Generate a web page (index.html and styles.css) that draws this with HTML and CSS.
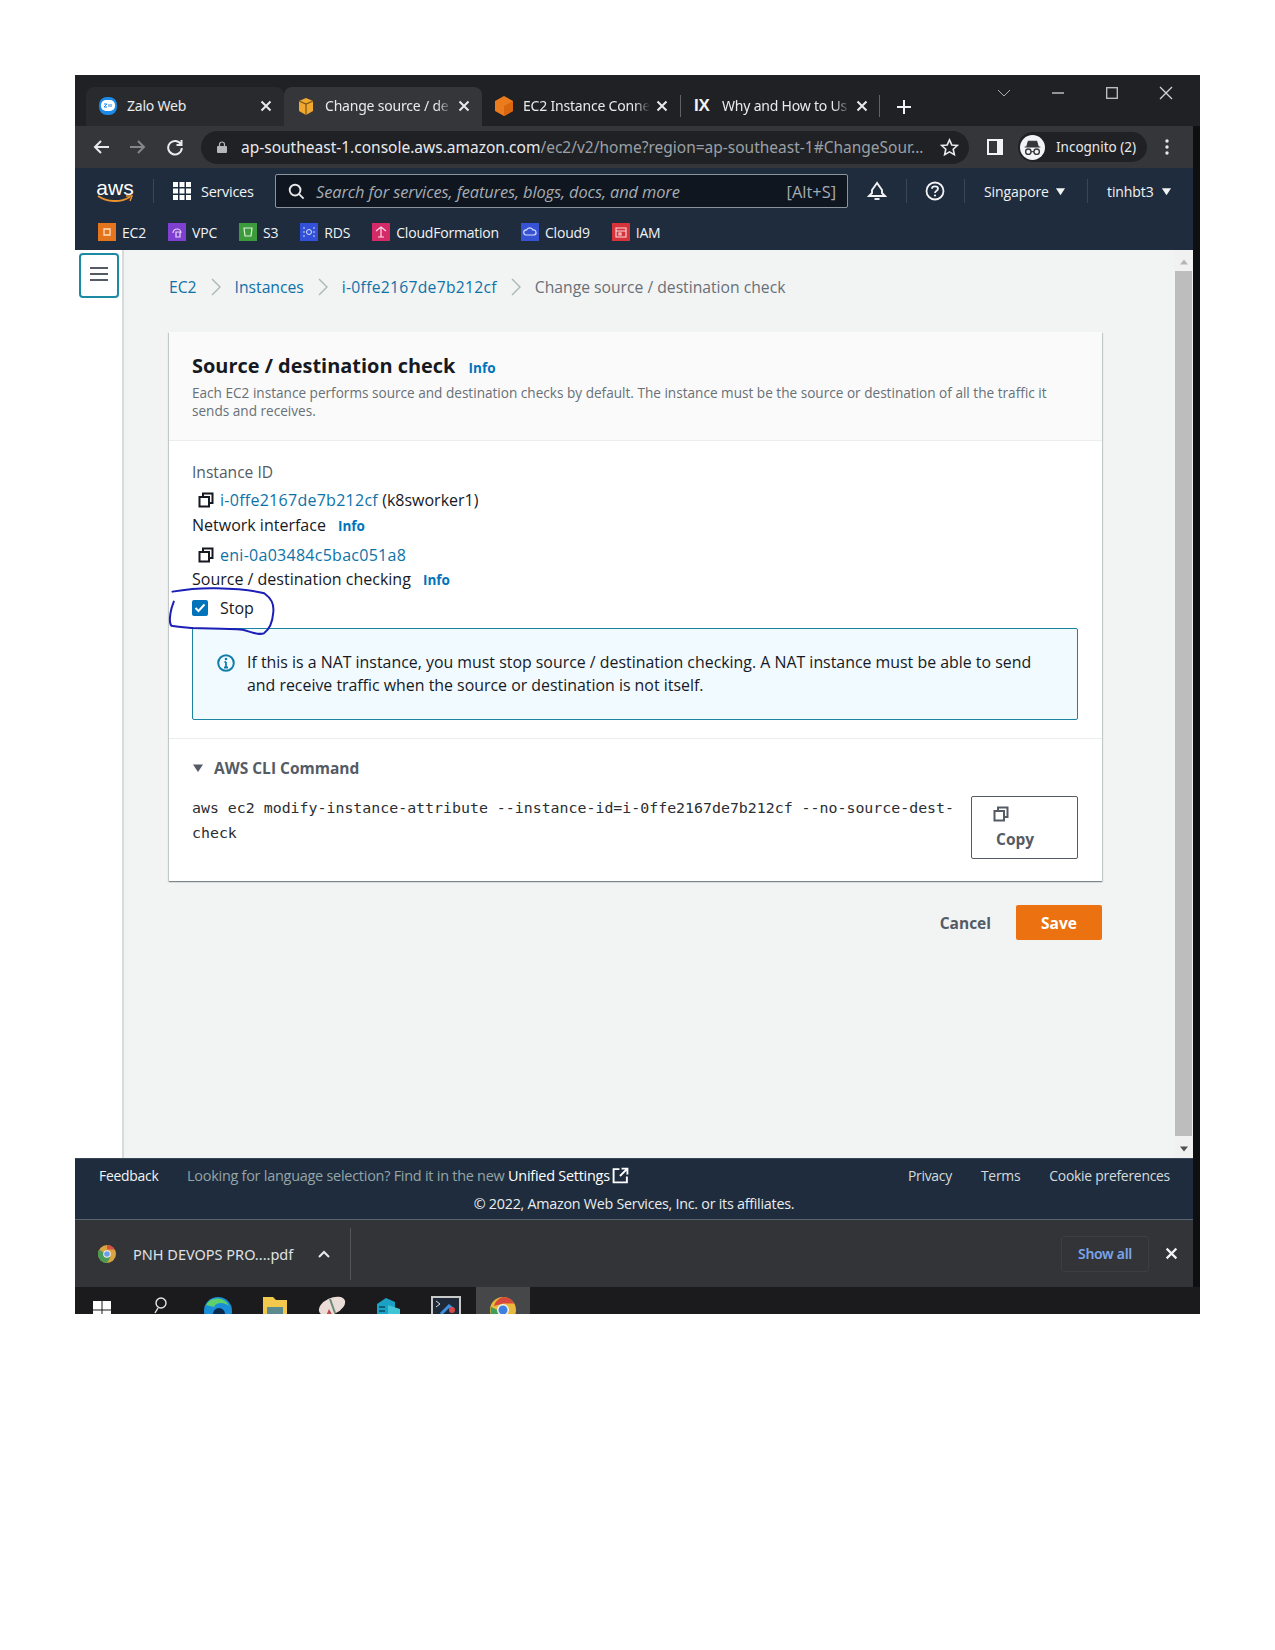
FILE: index.html
```html
<!DOCTYPE html>
<html lang="en">
<head>
  <meta charset="UTF-8">
  <title>Change source / destination check</title>
  <link rel="stylesheet" href="styles.css">
</head>
<body>
<svg class="defs" width="0" height="0">
  <symbol id="copy" viewBox="0 0 16 16">
    <path d="M1.500 5h9.500v9.500H1.500z M5 5V1.500h9.500V11H11" fill="none" stroke="currentColor" stroke-width="2"/>
  </symbol>
  <symbol id="x" viewBox="0 0 12 12">
    <path d="M1.500 1.500l9 9M10.500 1.500l-9 9" fill="none" stroke="currentColor" stroke-width="2"/>
  </symbol>
  <symbol id="caret" viewBox="0 0 12 12">
    <path d="M1 2.500h10L6 10z" fill="currentColor"/>
  </symbol>
</svg>
<div class="window">

  <div class="tabstrip">
    <div class="tab tab-first">
      <svg class="tab-icon" viewBox="0 0 20 20"><rect x="1" y="1" width="18" height="18" rx="8" fill="#1c8ae6"/><rect x="3" y="4" width="14" height="11" rx="5" fill="#fff"/><path d="M6 8h3l-3 3h3M11 8v3M13 8v3" stroke="#1c8ae6" fill="none"/></svg>
      <span class="tab-title">Zalo Web</span>
      <svg class="tab-close"><use href="#x"/></svg>
    </div>
    <div class="tab tab-active">
      <svg class="tab-icon" viewBox="0 0 20 20"><path d="M3 5l7-3 7 3v10l-7 4-7-4z" fill="#f0a92e"/><path d="M3 5l7 3 7-3M10 8v11" fill="none" stroke="#7a5516" stroke-width="1.200"/></svg>
      <span class="tab-title">Change source / de</span>
      <svg class="tab-close"><use href="#x"/></svg>
    </div>
    <div class="tab">
      <svg class="tab-icon" viewBox="0 0 20 20"><path d="M10 0l9 5v10l-9 5-9-5V5z" fill="#ea7c1e"/><path d="M10 10l9-5v10l-9 5z" fill="#d9660f"/></svg>
      <span class="tab-title">EC2 Instance Conne</span>
      <svg class="tab-close"><use href="#x"/></svg>
    </div>
    <div class="tab tab-sep">
      <span class="ix">IX</span>
      <span class="tab-title">Why and How to Us</span>
      <svg class="tab-close"><use href="#x"/></svg>
    </div>
    <svg class="new-tab" viewBox="0 0 14 14"><path d="M7 0v14M0 7h14" stroke="#f1f3f4" stroke-width="2"/></svg>
    <div class="win-controls">
      <span class="win-btn"><svg width="14" height="8" viewBox="0 0 14 8"><path d="M1 1l6 6 6-6" fill="none" stroke="#a8abaf"/></svg></span>
      <span class="win-btn"><svg width="12" height="2" viewBox="0 0 12 2"><path d="M0 1h12" stroke="#c4c7c9" stroke-width="1.400"/></svg></span>
      <span class="win-btn"><svg width="12" height="12" viewBox="0 0 12 12"><rect x=".7" y=".7" width="10.600" height="10.600" fill="none" stroke="#c4c7c9" stroke-width="1.300"/></svg></span>
      <span class="win-btn"><svg width="14" height="14" viewBox="0 0 14 14"><path d="M1 1l12 12M13 1L1 13" stroke="#d4d6d8" stroke-width="1.300"/></svg></span>
    </div>
  </div>

  <div class="toolbar">
    <svg class="nav-icon" viewBox="0 0 18 18"><path d="M17 9H3M9 3L3 9l6 6" fill="none" stroke="#e8eaed" stroke-width="2"/></svg>
    <svg class="nav-icon" viewBox="0 0 18 18"><path d="M1 9h14M9 3l6 6-6 6" fill="none" stroke="#85878a" stroke-width="2"/></svg>
    <svg class="nav-icon" viewBox="0 0 18 18"><path d="M15 6.500A6.800 6.800 0 1 0 15.800 10M15.500 2v5h-5" fill="none" stroke="#e8eaed" stroke-width="2"/></svg>
    <div class="omnibox">
      <svg class="lock" viewBox="0 0 10 12"><path d="M2.500 5V3.500a2.500 2.500 0 0 1 5 0V5" fill="none" stroke="#b5b7ba" stroke-width="1.200"/><rect y="5" width="10" height="7" rx="1" fill="#b5b7ba"/></svg>
      <span class="url"><b>ap-southeast-1.console.aws.amazon.com</b>/ec2/v2/home?region=ap-southeast-1#ChangeSour...</span>
      <svg class="star" viewBox="0 0 20 20"><path d="M10 2l2.400 5.300 5.800.6-4.300 3.900 1.200 5.700-5.100-2.900-5.100 2.900 1.200-5.700-4.300-3.900 5.800-.6z" fill="none" stroke="#e8eaed" stroke-width="1.700"/></svg>
    </div>
    <svg class="side-panel" viewBox="0 0 16 16"><path d="M1 1h14v14H1z" fill="none" stroke="#f1f3f4" stroke-width="2"/><path d="M10 1h5v14h-5z" fill="#f1f3f4"/></svg>
    <div class="profile">
      <svg class="incognito" viewBox="0 0 24 24"><circle cx="12" cy="12" r="12" fill="#f1f3f4"/><path d="M8 6h8l1.500 5h-11zM4.500 11.500h15" fill="#35363a" stroke="#35363a"/><circle cx="8" cy="16" r="2.600" fill="none" stroke="#35363a" stroke-width="1.300"/><circle cx="16" cy="16" r="2.600" fill="none" stroke="#35363a" stroke-width="1.300"/><path d="M10.500 16h3" stroke="#35363a"/></svg>
      <span>Incognito (2)</span>
    </div>
    <svg class="dots" viewBox="0 0 4 16"><circle cx="2" cy="2" r="1.700" fill="#e8eaed"/><circle cx="2" cy="8" r="1.700" fill="#e8eaed"/><circle cx="2" cy="14" r="1.700" fill="#e8eaed"/></svg>
  </div>

  <div class="aws-nav">
    <div class="topbar">
      <div class="aws-logo">
        <span>aws</span>
        <svg viewBox="0 0 36 9"><path d="M1 1c9 6 22 7 32 1" fill="none" stroke="#ec912d" stroke-width="2"/><path d="M29 1h6l-2 5" fill="none" stroke="#ec912d" stroke-width="1.500"/></svg>
      </div>
      <i class="nav-div nav-div-logo"></i>
      <svg class="grid-icon" viewBox="0 0 20 20"><path d="M1 1h5v5H1zM7.500 1h5v5h-5zM14 1h5v5h-5zM1 7.500h5v5H1zM7.500 7.500h5v5h-5zM14 7.500h5v5h-5zM1 14h5v5H1zM7.500 14h5v5h-5zM14 14h5v5h-5z" fill="#fff"/></svg>
      <span class="services">Services</span>
      <div class="searchbox">
        <svg class="search-icon" viewBox="0 0 18 18"><circle cx="7.500" cy="7.500" r="5.700" fill="none" stroke="#e6e8e9" stroke-width="2"/><path d="M11.500 11.500l5 5" stroke="#e6e8e9" stroke-width="2"/></svg>
        <span class="placeholder">Search for services, features, blogs, docs, and more</span>
        <span class="shortcut">[Alt+S]</span>
      </div>
      <svg class="bell" viewBox="0 0 20 20"><path d="M10 2L5 9v3l-3 3h16l-3-3V9z" fill="none" stroke="#f2f3f3" stroke-width="1.900"/><path d="M7.500 18h5" stroke="#f2f3f3" stroke-width="1.900"/></svg>
      <i class="nav-div nav-div-bell"></i>
      <svg class="help" viewBox="0 0 20 20"><circle cx="10" cy="10" r="8.500" fill="none" stroke="#f2f3f3" stroke-width="1.800"/><path d="M7 7.700C7 4.700 13 4.700 13 7.700c0 2-3 2-3 4.300" fill="none" stroke="#f2f3f3" stroke-width="1.800"/><circle cx="10" cy="14.500" r="1.100" fill="#f2f3f3"/></svg>
      <i class="nav-div nav-div-help"></i>
      <span class="menu-text region">Singapore</span>
      <svg class="menu-caret"><use href="#caret"/></svg>
      <i class="nav-div nav-div-region"></i>
      <span class="menu-text user">tinhbt3</span>
      <svg class="menu-caret"><use href="#caret"/></svg>
    </div>
    <div class="favorites">
      <span class="fav"><svg class="fav-icon" viewBox="0 0 18 18"><rect width="18" height="18" fill="#e5751c"/><path d="M6 6h6v6H6z" fill="none" stroke="#fbe1c6" stroke-width="1.300"/></svg>EC2</span>
      <span class="fav"><svg class="fav-icon" viewBox="0 0 18 18"><rect width="18" height="18" fill="#7f3fd0"/><path d="M5 10a4 4 0 0 1 8 0M8 9h4v5H8z" fill="none" stroke="#e6d8f8" stroke-width="1.200"/></svg>VPC</span>
      <span class="fav"><svg class="fav-icon" viewBox="0 0 18 18"><rect width="18" height="18" fill="#3c9b3a"/><path d="M5 5h8l-1 8H6z" fill="none" stroke="#dcf0da" stroke-width="1.200"/></svg>S3</span>
      <span class="fav"><svg class="fav-icon" viewBox="0 0 18 18"><rect width="18" height="18" fill="#3350d8"/><path d="M4 4v10M14 4v10" stroke="#cfd7f8" stroke-dasharray="2 2"/><circle cx="9" cy="9" r="2.500" fill="none" stroke="#e0e5fb"/></svg>RDS</span>
      <span class="fav"><svg class="fav-icon" viewBox="0 0 18 18"><rect width="18" height="18" fill="#d42a68"/><path d="M4 8l5-4 5 4M9 4v10M6 14h6" fill="none" stroke="#fbdce8" stroke-width="1.200"/></svg>CloudFormation</span>
      <span class="fav"><svg class="fav-icon" viewBox="0 0 18 18"><rect width="18" height="18" fill="#3553d4"/><path d="M5 12a2.500 2.500 0 0 1 .5-5 3.500 3.500 0 0 1 6.500 0 2.500 2.500 0 0 1 1 5z" fill="none" stroke="#d8dffa" stroke-width="1.200"/></svg>Cloud9</span>
      <span class="fav"><svg class="fav-icon" viewBox="0 0 18 18"><rect width="18" height="18" fill="#d7333a"/><path d="M4 5h10v9H4zM4 8h10M7 10h2v2H7z" fill="none" stroke="#fbdcdd" stroke-width="1.100"/></svg>IAM</span>
    </div>
  </div>

  <div class="main">
    <div class="sidenav">
      <div class="menu-btn">
        <svg viewBox="0 0 18 14"><path d="M0 1h18M0 7h18M0 13h18" stroke="#545b64" stroke-width="2"/></svg>
      </div>
    </div>
    <div class="content">
      <div class="crumbs">
        <a>EC2</a>
        <svg class="crumb-sep" viewBox="0 0 10 18"><path d="M1 1l8 8-8 8" fill="none" stroke="#aab7b8" stroke-width="1.400"/></svg>
        <a>Instances</a>
        <svg class="crumb-sep" viewBox="0 0 10 18"><path d="M1 1l8 8-8 8" fill="none" stroke="#aab7b8" stroke-width="1.400"/></svg>
        <a class="res-id">i-0ffe2167de7b212cf</a>
        <svg class="crumb-sep" viewBox="0 0 10 18"><path d="M1 1l8 8-8 8" fill="none" stroke="#aab7b8" stroke-width="1.400"/></svg>
        <span>Change source / destination check</span>
      </div>

      <div class="card">
        <div class="card-head">
          <h1>Source / destination check <a class="info">Info</a></h1>
          <p>Each EC2 instance performs source and destination checks by default. The instance must be the source or destination of all the traffic it<br>sends and receives.</p>
        </div>
        <div class="card-body">
          <div class="label label-muted">Instance ID</div>
          <div class="value value-id"><svg class="copy-icon"><use href="#copy"/></svg><a class="res-id">i-0ffe2167de7b212cf</a> (k8sworker1)</div>
          <div class="label">Network interface <a class="info">Info</a></div>
          <div class="value value-eni"><svg class="copy-icon"><use href="#copy"/></svg><a class="res-id">eni-0a03484c5bac051a8</a></div>
          <div class="label">Source / destination checking <a class="info">Info</a></div>
          <div class="check-row">
            <svg class="checkbox" viewBox="0 0 16 16"><rect width="16" height="16" rx="2" fill="#0073bb"/><path d="M3.500 8l3 3 6-6.500" fill="none" stroke="#fff" stroke-width="2"/></svg>
            <span>Stop</span>
          </div>
          <div class="alert">
            <svg class="alert-icon" viewBox="0 0 18 18"><circle cx="9" cy="9" r="7.800" fill="none" stroke="#0f7fa8" stroke-width="2"/><path d="M9 8v5.500M7 13.500h4M7.500 8H9" fill="none" stroke="#0f7fa8" stroke-width="1.800"/><circle cx="9" cy="5" r="1.300" fill="#0f7fa8"/></svg>
            <p>If this is a NAT instance, you must stop source / destination checking. A NAT instance must be able to send<br>and receive traffic when the source or destination is not itself.</p>
          </div>
        </div>
        <div class="card-cli">
          <div class="cli-title"><svg class="cli-caret"><use href="#caret"/></svg>AWS CLI Command</div>
          <div class="cli-row">
            <code>aws ec2 modify-instance-attribute --instance-id=i-0ffe2167de7b212cf --no-source-dest-<br>check</code>
            <div class="copy-btn">
              <svg class="copy-icon"><use href="#copy"/></svg>
              <span>Copy</span>
            </div>
          </div>
        </div>
      </div>

      <div class="actions">
        <span class="cancel">Cancel</span>
        <span class="save">Save</span>
      </div>
    </div>
    <div class="scrollbar">
      <svg class="scroll-arrow" viewBox="0 0 10 6"><path d="M1 5.500h8L5 .5z" fill="#b5b5b5"/></svg>
      <div class="scroll-thumb"></div>
      <svg class="scroll-arrow" viewBox="0 0 10 6"><path d="M1 .5h8L5 5.500z" fill="#505050"/></svg>
    </div>
  </div>

  <div class="footer">
    <div class="footer-row">
      <span class="foot-strong">Feedback</span>
      <span class="foot-lang">Looking for language selection? Find it in the new <b>Unified Settings</b></span>
      <svg class="ext-icon" viewBox="0 0 16 16"><path d="M7 2H1.500v12.500H14V9M9 1.500h5.500V7M14 2L7.500 8.500" fill="none" stroke="#fff" stroke-width="1.800"/></svg>
      <span class="foot-links"><span>Privacy</span><span>Terms</span><span>Cookie preferences</span></span>
    </div>
    <div class="copyright">© 2022, Amazon Web Services, Inc. or its affiliates.</div>
  </div>

  <div class="downloads">
    <svg class="dl-icon" viewBox="0 0 18 18"><circle cx="9" cy="9" r="9" fill="#d9a441"/><path d="M9 0a9 9 0 0 1 7.800 4.500H9z" fill="#d8503f"/><path d="M1.200 4.500A9 9 0 0 0 9 18l3.500-6z" fill="#4b9b57"/><circle cx="9" cy="9" r="3.800" fill="#f2f2f2"/><circle cx="9" cy="9" r="2.800" fill="#6d9ce8"/></svg>
    <span class="dl-name">PNH DEVOPS PRO....pdf</span>
    <svg class="dl-up" viewBox="0 0 12 8"><path d="M1 7l5-5 5 5" fill="none" stroke="#e8eaed" stroke-width="2"/></svg>
    <i class="dl-sep"></i>
    <span class="show-all">Show all</span>
    <svg class="dl-close"><use href="#x"/></svg>
  </div>

  <div class="taskbar">
    <svg class="win-logo" viewBox="0 0 20 20"><path d="M1 1h8.500v8.500H1zM10.500 1H19v8.500h-8.500zM1 10.500h8.500V19H1zM10.500 10.500H19V19h-8.500z" fill="#fff"/></svg>
    <svg class="task-search" viewBox="0 0 16 20"><circle cx="8" cy="6" r="5" fill="none" stroke="#e6e6e6" stroke-width="1.400"/><path d="M5 11l-3 5" stroke="#e6e6e6" stroke-width="1.400"/></svg>
    <svg class="task-icon" viewBox="0 0 30 27"><circle cx="15" cy="15" r="14" fill="#1a8fd8"/><path d="M3 9a13 13 0 0 1 23 1c-5-4-13-4-15 1z" fill="#5ed06c"/><circle cx="16" cy="18" r="6" fill="#0b2a4a"/></svg>
    <svg class="task-icon" viewBox="0 0 30 27"><path d="M3 1h10l3 3h11v23H3z" fill="#f2c94c"/><path d="M7 11h16v16H7z" fill="#5b8a8f"/></svg>
    <svg class="task-icon" viewBox="0 0 30 27"><ellipse cx="15" cy="10" rx="14" ry="8" transform="rotate(-25 15 10)" fill="#eadcd6"/><path d="M6 27l6-14 8 14z" fill="#c04a4a"/><path d="M13 3l5 14" stroke="#6a8a78" stroke-width="2"/></svg>
    <svg class="task-icon" viewBox="0 0 30 27"><path d="M3 8l9-6 9 4v21H3z" fill="#1ba1c4"/><path d="M14 9l12 4v14H14z" fill="#40c4d8"/><path d="M5 11h6M5 15h6M5 19h6" stroke="#0c5f78" stroke-width="2"/></svg>
    <svg class="task-icon" viewBox="0 0 30 27"><rect x="1" y="1" width="28" height="26" fill="#1e2a38" stroke="#c9c9c9" stroke-width="2"/><path d="M5 5l4 3-4 3" fill="none" stroke="#ddd"/><path d="M10 18l8-8 4 3" stroke="#3f8fe0" stroke-width="3" fill="none"/><circle cx="21" cy="14" r="3" fill="#d84a4a"/></svg>
    <div class="task-active">
      <svg class="task-chrome" viewBox="0 0 28 28"><circle cx="14" cy="14" r="13" fill="#e8b93a"/><path d="M14 1a13 13 0 0 1 11.300 6.500H14L5 10a13 13 0 0 1 9-9z" fill="#d8483b"/><path d="M2 11a13 13 0 0 0 8 15l5-9z" fill="#3f9f57"/><circle cx="14" cy="14" r="6" fill="#f2f2f2"/><circle cx="14" cy="14" r="4.500" fill="#3f7fe0"/></svg>
    </div>
  </div>

  <svg class="pen-mark" viewBox="55 405 325 160"><path d="M68 425C110 418 160 414 200 415S300 418 345 430C365 445 376 460 372 490 370 515 365 535 345 550 330 558 310 548 280 540 230 535 180 537 130 535 105 533 85 532 65 528 57 520 60 505 62 490 64 475 68 465 72 455" fill="none" stroke="#1c1fb5" stroke-width="6" stroke-linecap="round"/></svg>
</div>
</body>
</html>
```
FILE: styles.css
```css
* {
  box-sizing: border-box;
}
body {
  margin: 0;
  background: #fff;
  font-family: "Open Sans", Arial, sans-serif;
  padding: 75px 0 336px 75px;
}
a {
  color: #0d72a8;
}
.defs {
  position: absolute;
}
.window {
  position: relative;
  width: 1125px;
  height: 1239px;
  background: #0e0f10;
  overflow: hidden;
}

/* chrome tabs */
.tabstrip {
  height: 51px;
  background: #202124;
  display: flex;
  align-items: flex-end;
  padding-left: 11px;
  font-family: "Noto Sans", Arial, sans-serif;
  font-size: 14px;
  letter-spacing: -0.2px;
  color: #e8eaed;
}
.tab {
  width: 198px;
  height: 39px;
  display: flex;
  align-items: center;
  padding: 0 12px 2px;
  border-radius: 8px 8px 0 0;
}
.tab-first {
  background: #292a2d;
}
.tab-active {
  background: #35363a;
}
.tab-sep {
  width: 200px;
  position: relative;
}
.tab-sep::before, .tab-sep::after {
  content: "";
  position: absolute;
  top: 8px;
  width: 1px;
  height: 22px;
  background: #5f6368;
}
.tab-sep::before {
  left: 0;
}
.tab-sep::after {
  right: 0;
}
.tab-icon {
  width: 20px;
  height: 20px;
  flex: none;
}
.tab-title {
  margin-left: 9px;
  flex: 1;
  white-space: nowrap;
  -webkit-mask-image: linear-gradient(90deg, #000 88%, transparent);
  mask-image: linear-gradient(90deg, #000 88%, transparent);
}
.tab-first .tab-title {
  -webkit-mask-image: none;
  mask-image: none;
}
.tab-close {
  width: 12px;
  height: 12px;
  flex: none;
  margin: 0 0 0 6px;
  color: #e8eaed;
}
.ix {
  font-family: "Liberation Sans", Arial, sans-serif;
  font-weight: 700;
  font-size: 17px;
  width: 28px;
  margin-left: 2px;
  color: #f1f3f4;
}
.tab-sep .tab-title {
  margin-left: 0;
}
.new-tab {
  width: 14px;
  height: 14px;
  margin: 0 0 12px 17px;
}
.win-controls {
  margin-left: auto;
  margin-right: 7px;
  align-self: flex-start;
  display: flex;
}
.win-btn {
  width: 54px;
  height: 36px;
  display: flex;
  align-items: center;
  justify-content: center;
}

/* chrome toolbar */
.toolbar {
  width: 1118px;
  height: 42px;
  background: #35363a;
  display: flex;
  align-items: center;
  padding-left: 17px;
  font-family: "Noto Sans", Arial, sans-serif;
}
.nav-icon {
  width: 18px;
  height: 18px;
  margin-right: 19px;
}
.omnibox {
  width: 768px;
  height: 33px;
  margin-left: -2px;
  border-radius: 17px;
  background: #202124;
  display: flex;
  align-items: center;
  padding-left: 16px;
}
.lock {
  width: 10px;
  height: 12px;
  flex: none;
}
.url {
  margin-left: 14px;
  width: 682px;
  font-size: 15.500px;
  line-height: 20px;
  white-space: nowrap;
  color: #9aa0a6;
}
.url b {
  font-weight: 400;
  color: #e8eaed;
}
.star {
  width: 19px;
  height: 19px;
  margin-left: 17px;
  flex: none;
}
.side-panel {
  width: 16px;
  height: 16px;
  margin-left: 18px;
}
.profile {
  width: 129px;
  height: 30px;
  margin-left: 15px;
  border-radius: 15px;
  background: #202124;
  display: flex;
  align-items: center;
  padding-left: 2px;
  font-size: 13.500px;
  color: #e8eaed;
}
.profile span {
  margin-top: -1px;
}
.incognito {
  width: 25px;
  height: 25px;
  margin-right: 11px;
}
.dots {
  width: 4px;
  height: 16px;
  margin-left: 18px;
}

/* aws console header */
.aws-nav {
  width: 1118px;
  height: 82px;
  background: #1e2c3e;
  color: #f2f3f3;
}
.topbar {
  height: 46px;
  display: flex;
  align-items: center;
  font-size: 14px;
}
.aws-logo {
  width: 36px;
  margin-left: 22px;
  display: flex;
  flex-direction: column;
  align-items: center;
  font-family: "Liberation Sans", Arial, sans-serif;
  font-size: 21px;
  line-height: 19px;
  color: #fff;
}
.aws-logo svg {
  width: 36px;
  height: 9px;
  margin-top: -2px;
}
.nav-div {
  width: 1px;
  height: 24px;
  flex: none;
  background: #37475a;
}
.nav-div-logo {
  margin-left: 20px;
}
.grid-icon {
  width: 20px;
  height: 20px;
  margin-left: 18px;
}
.services {
  margin-left: 9px;
  width: 54px;
  white-space: nowrap;
  font-size: 14.500px;
  font-weight: 500;
  letter-spacing: -0.3px;
}
.searchbox {
  width: 573px;
  height: 34px;
  margin-left: 20px;
  background: #0f1620;
  border: 1px solid #8a949e;
  border-radius: 2px;
  display: flex;
  align-items: center;
  padding-left: 12px;
  color: #a5acb3;
  font-size: 16.400px;
}
.search-icon {
  width: 17px;
  height: 17px;
  flex: none;
}
.placeholder {
  margin-left: 11px;
  font-style: italic;
  white-space: nowrap;
  letter-spacing: -0.1px;
}
.shortcut {
  margin-left: auto;
  margin-right: 11px;
  white-space: nowrap;
}
.bell {
  width: 20px;
  height: 20px;
  margin-left: 19px;
}
.nav-div-bell {
  margin-left: 19px;
}
.help {
  width: 20px;
  height: 20px;
  margin-left: 18px;
}
.nav-div-help {
  margin-left: 19px;
}
.menu-text {
  font-size: 14px;
  font-weight: 500;
  letter-spacing: -0.1px;
  white-space: nowrap;
}
.region {
  margin-left: 19px;
  width: 66px;
}
.menu-caret {
  width: 11px;
  height: 11px;
  flex: none;
  margin-left: 5px;
  color: #f2f3f3;
}
.nav-div-region {
  margin-left: 21px;
}
.user {
  margin-left: 19px;
  width: 49px;
}
.favorites {
  height: 36px;
  display: flex;
  align-items: center;
  padding-left: 23px;
  font-size: 14px;
  font-weight: 500;
  letter-spacing: -0.2px;
  gap: 22px;
}
.fav {
  display: flex;
  align-items: center;
  white-space: nowrap;
}
.fav-icon {
  width: 18px;
  height: 18px;
  margin-right: 6px;
}

/* page */
.main {
  width: 1118px;
  height: 908px;
  display: flex;
  background: #fff;
}
.sidenav {
  width: 49px;
  flex: none;
  background: #fff;
  border-right: 2px solid #d5dbdb;
  padding: 3px 0 0 4px;
}
.menu-btn {
  width: 40px;
  height: 45px;
  background: #fff;
  border: 2px solid #1b8aa3;
  border-radius: 4px;
  display: flex;
  align-items: center;
  justify-content: center;
}
.menu-btn svg {
  width: 18px;
  height: 14px;
  margin-top: -3px;
}
.content {
  flex: 1;
  background: #f2f3f3;
  padding: 26px 0 0 45px;
}
.crumbs {
  display: flex;
  align-items: center;
  height: 22px;
  font-size: 15.700px;
  color: #687078;
  white-space: nowrap;
}
.res-id {
  letter-spacing: 0.27px;
}
.crumb-sep {
  width: 10px;
  height: 18px;
  margin: 0 14px;
}
.card {
  width: 933px;
  margin-top: 34px;
  background: #fff;
  box-shadow: 0 1px 1px 0 rgba(0, 28, 36, 0.3), 1px 1px 1px 0 rgba(0, 28, 36, 0.15), -1px 1px 1px 0 rgba(0, 28, 36, 0.15);
}
.card-head {
  height: 109px;
  background: #fafafa;
  border-bottom: 1px solid #eaeded;
  padding: 20px 23px 0;
}
.card-head h1 {
  margin: 0;
  font-size: 19.950px;
  font-weight: 700;
  line-height: 28px;
  color: #16191f;
}
.info {
  margin-left: 8px;
  font-size: 13.500px;
  font-weight: 700;
  color: #0073bb;
}
.card-head p {
  margin: 2px 0 0;
  font-size: 13.600px;
  line-height: 18px;
  white-space: nowrap;
  color: #687078;
}
.card-body {
  padding: 20px 24px 18px 23px;
  font-size: 16px;
  color: #16191f;
  border-bottom: 1px solid #eaeded;
}
.label {
  line-height: 22px;
}
.label-muted {
  color: #545b64;
  font-size: 15.600px;
}
.value {
  display: flex;
  align-items: center;
  line-height: 26px;
  white-space: pre;
}
.value-id {
  margin: 4px 0 1px;
}
.value-eni {
  margin: 5px 0 0;
}
.copy-icon {
  width: 16px;
  height: 16px;
  color: #16191f;
}
.value .copy-icon {
  margin: 0 6px 0 6px;
}
.check-row {
  display: flex;
  align-items: center;
  height: 26px;
  margin: 4px 0 7px;
}
.checkbox {
  width: 16px;
  height: 16px;
  margin-right: 12px;
}
.alert {
  height: 92px;
  background: #f1faff;
  border: 1px solid #1b83a0;
  border-radius: 2px;
  display: flex;
  padding: 22px 0 0 24px;
}
.alert-icon {
  width: 18px;
  height: 18px;
  margin-top: 3px;
  flex: none;
}
.alert p {
  margin: 0 0 0 12px;
  line-height: 23px;
  font-size: 15.900px;
  white-space: nowrap;
}
.card-cli {
  height: 142px;
  padding: 18px 24px 0 23px;
}
.cli-title {
  display: flex;
  align-items: center;
  height: 22px;
  font-size: 15.500px;
  font-weight: 700;
  color: #545b64;
}
.cli-caret {
  width: 12px;
  height: 12px;
  margin-right: 10px;
  color: #545b64;
}
.cli-row {
  display: flex;
  justify-content: space-between;
}
.cli-row code {
  margin-top: 17px;
  font-family: "DejaVu Sans Mono", "Liberation Mono", monospace;
  font-size: 14.900px;
  line-height: 25px;
  color: #2a2e33;
  white-space: nowrap;
}
.copy-btn {
  width: 107px;
  height: 63px;
  margin-top: 17px;
  background: #fff;
  border: 1px solid #545b64;
  border-radius: 2px;
  padding: 9px 0 0 21px;
  font-size: 15.500px;
  font-weight: 700;
  color: #545b64;
}
.copy-btn .copy-icon {
  display: block;
  color: #545b64;
}
.copy-btn span {
  display: block;
  margin: 7px 0 0 3px;
  line-height: 20px;
}
.actions {
  width: 933px;
  margin-top: 24px;
  display: flex;
  align-items: center;
  justify-content: flex-end;
  font-size: 15.500px;
  font-weight: 700;
}
.cancel {
  color: #545b64;
  margin-right: 25px;
}
.save {
  width: 86px;
  height: 35px;
  background: #ec7211;
  border-radius: 2px;
  color: #fff;
  display: flex;
  align-items: center;
  justify-content: center;
}
.scrollbar {
  width: 19px;
  flex: none;
  background: #f1f1f1;
  display: flex;
  flex-direction: column;
  align-items: center;
  padding: 9px 0 6px;
}
.scroll-arrow {
  width: 10px;
  height: 6px;
  flex: none;
}
.scroll-thumb {
  width: 17px;
  height: 865px;
  flex: none;
  margin: 6px 0 auto;
  background: #bdbdbd;
}

/* aws footer */
.footer {
  width: 1118px;
  height: 62px;
  background: #1e2c3e;
  border-top: 1px solid #3a4656;
  border-bottom: 1px solid #5b6570;
  font-size: 13.900px;
  font-weight: 500;
  letter-spacing: -0.25px;
  color: #d5dbdb;
}
.footer-row {
  display: flex;
  align-items: center;
  height: 33px;
  padding-left: 24px;
}
.foot-strong {
  color: #f2f3f3;
  width: 88px;
  white-space: nowrap;
}
.foot-lang {
  font-size: 14.450px;
  color: #95a5a6;
  white-space: nowrap;
}
.foot-lang b {
  font-weight: 500;
  color: #fff;
}
.ext-icon {
  width: 17px;
  height: 17px;
  margin-left: 2px;
}
.foot-links {
  margin-left: auto;
  margin-right: 23px;
  display: flex;
  gap: 29px;
}
.copyright {
  font-size: 14.300px;
  text-align: center;
  line-height: 23px;
  color: #eaeded;
}

/* download shelf */
.downloads {
  width: 1118px;
  height: 67px;
  background: #333437;
  display: flex;
  align-items: center;
  padding-left: 23px;
  font-family: "Noto Sans", Arial, sans-serif;
  font-size: 14.500px;
  color: #dfe1e5;
}
.dl-icon {
  width: 18px;
  height: 18px;
}
.dl-name {
  margin-left: 17px;
  white-space: nowrap;
  width: 183px;
}
.dl-up {
  width: 12px;
  height: 8px;
  margin-left: 2px;
}
.dl-sep {
  width: 1px;
  height: 52px;
  margin-left: 20px;
  background: #55565a;
}
.show-all {
  margin-left: auto;
  width: 88px;
  height: 36px;
  border: 1px solid #3d3e42;
  border-radius: 3px;
  display: flex;
  align-items: center;
  justify-content: center;
  color: #7ba4e8;
  font-weight: 600;
  font-size: 14px;
  letter-spacing: -0.3px;
}
.dl-close {
  width: 13px;
  height: 13px;
  margin: 0 15px 0 16px;
  color: #f1f3f4;
}

/* windows taskbar */
.taskbar {
  height: 27px;
  background: #1b1b1d;
  display: flex;
  padding-left: 17px;
  overflow: hidden;
}
.win-logo {
  width: 20px;
  height: 20px;
  flex: none;
  margin-top: 13px;
}
.task-search {
  width: 16px;
  height: 20px;
  flex: none;
  margin: 10px 0 0 41px;
}
.task-icon {
  width: 30px;
  height: 27px;
  flex: none;
  margin: 9px 0 0 27px;
}
.task-search + .task-icon {
  margin-left: 34px;
}
.task-active {
  width: 54px;
  margin-left: 15px;
  background: #464749;
  display: flex;
  justify-content: center;
}
.task-chrome {
  width: 28px;
  height: 28px;
  flex: none;
  margin-top: 9px;
}

/* pen annotation drawn over the page */
.pen-mark {
  position: absolute;
  left: 93px;
  top: 510px;
  width: 108px;
  height: 53px;
  overflow: visible;
}
```
